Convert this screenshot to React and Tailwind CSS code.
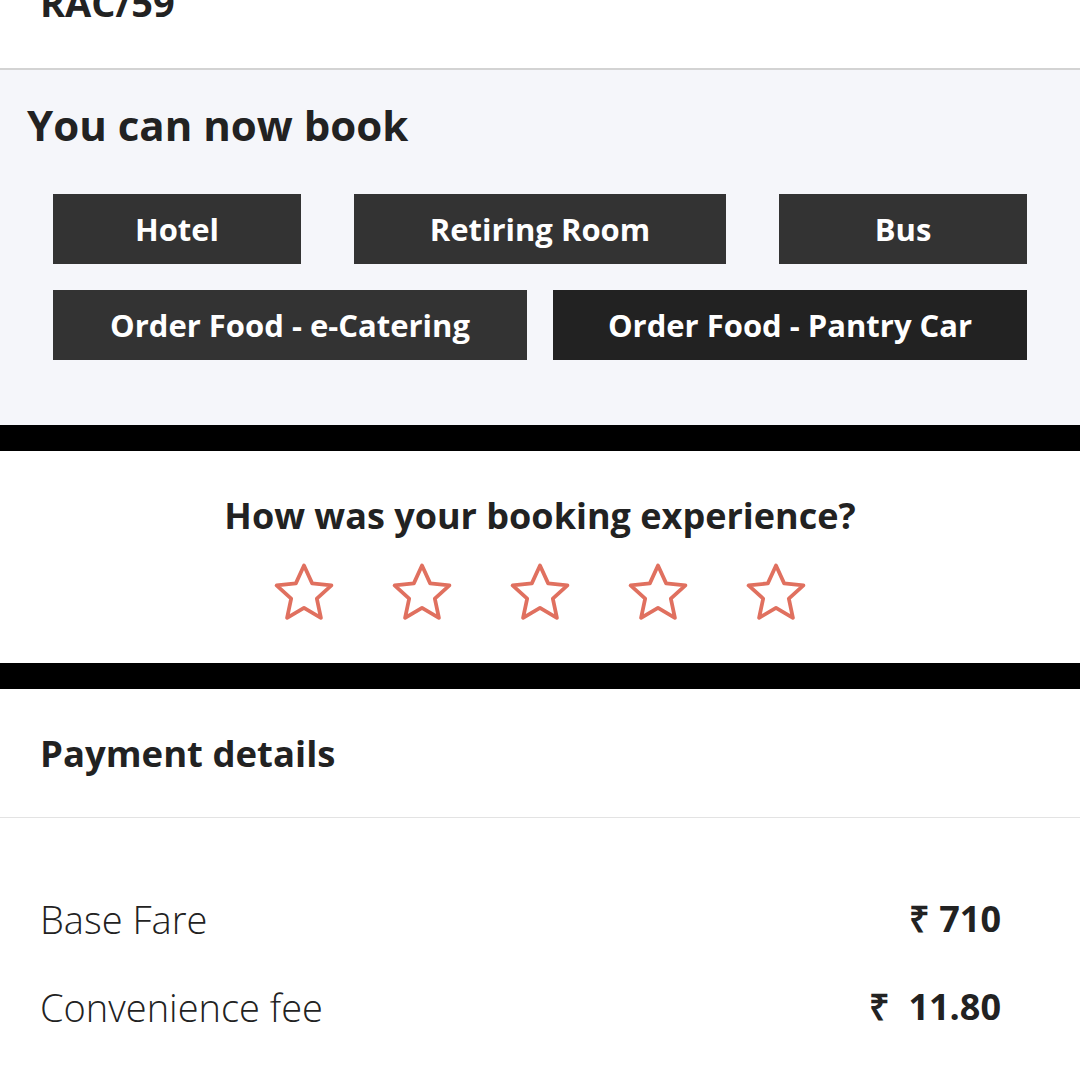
import React from "react";

const Star = () => (
  <svg width="72" height="70" viewBox="0 0 24 24" fill="none" stroke="#e0705f" strokeWidth="1.3" strokeLinejoin="round">
    <path d="M12 2.6l2.8 6.1 6.6.7-5 4.5 1.4 6.6L12 17.1l-5.8 3.4 1.4-6.6-5-4.5 6.6-.7z" />
  </svg>
);

const App = () => {
  return (
    <div className="w-[1080px] h-[1080px] overflow-hidden bg-white text-[#222] font-['Open_Sans',sans-serif]">
      {/* Top booking status */}
      <div className="h-[70px] border-b-2 border-[#d3d3d3] relative overflow-hidden">
        <div className="absolute left-[40px] top-[-24px] text-[38px] font-bold leading-[52px]">RAC/59</div>
      </div>

      {/* You can now book */}
      <div className="bg-[#f5f6fa] h-[355px] pt-[27px]">
        <h2 className="ml-[27px] text-[42px] font-bold leading-[56px]">You can now book</h2>
        <div className="mt-[41px] px-[53px] flex flex-col gap-[26px]">
          <div className="flex justify-between">
            <button className="w-[248px] h-[70px] bg-[#333] text-white text-[31px] font-bold">Hotel</button>
            <button className="w-[372px] h-[70px] bg-[#333] text-white text-[31px] font-bold">Retiring Room</button>
            <button className="w-[248px] h-[70px] bg-[#333] text-white text-[31px] font-bold">Bus</button>
          </div>
          <div className="grid grid-cols-2 gap-[26px]">
            <button className="h-[70px] bg-[#333] text-white text-[31px] font-bold">Order Food - e-Catering</button>
            <button className="h-[70px] bg-[#222] text-white text-[31px] font-bold">Order Food - Pantry Car</button>
          </div>
        </div>
      </div>

      <div className="h-[26px] bg-black" />

      {/* Rating */}
      <div className="h-[212px] flex flex-col items-center pt-[41px]">
        <p className="text-[36px] font-bold leading-[48px]">How was your booking experience?</p>
        <div className="flex gap-[46px] mt-[18px]">
          <Star />
          <Star />
          <Star />
          <Star />
          <Star />
        </div>
      </div>

      <div className="h-[26px] bg-black" />

      {/* Payment details */}
      <div className="h-[129px] border-b border-[#e3e3e3] flex items-center px-[40px]">
        <h3 className="text-[36.5px] font-bold">Payment details</h3>
      </div>
      <div className="pl-[40px] pr-[79px] pt-[76px] flex flex-col gap-[38px]">
        <div className="flex justify-between items-center h-[50px]">
          <span className="text-[38px] font-light">Base Fare</span>
          <span className="text-[36px] font-bold">₹ 710</span>
        </div>
        <div className="flex justify-between items-center h-[50px]">
          <span className="text-[38px] font-light">Convenience fee</span>
          <span className="text-[36px] font-bold">₹&nbsp; 11.80</span>
        </div>
      </div>
    </div>
  );
};

export default App;
